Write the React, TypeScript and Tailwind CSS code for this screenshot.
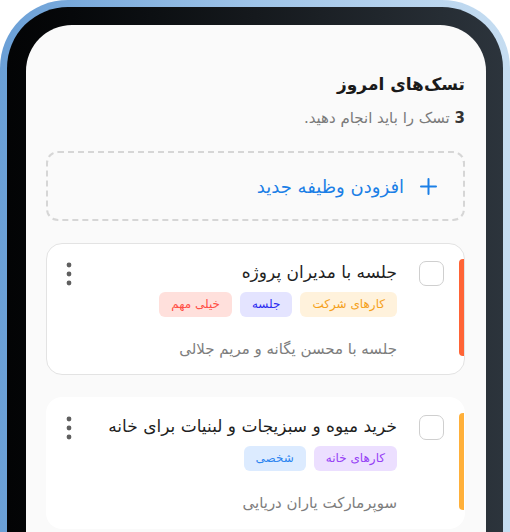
import React from "react";

type Tag = { label: string; cls: string };
type Task = { title: string; desc: string; bar: string; tags: Tag[]; bordered: boolean };

const tasks: Task[] = [
  {
    title: "جلسه با مدیران پروژه",
    desc: "جلسه با محسن یگانه و مریم جلالی",
    bar: "bg-[#ff6436]",
    bordered: true,
    tags: [
      { label: "کارهای شرکت", cls: "bg-[#fff2dc] text-[#f5a01a]" },
      { label: "جلسه", cls: "bg-[#e4e4ff] text-[#2b2bf0]" },
      { label: "خیلی مهم", cls: "bg-[#ffe0dc] text-[#ff4f45]" },
    ],
  },
  {
    title: "خرید میوه و سبزیجات و لبنیات برای خانه",
    desc: "سوپرمارکت یاران دریایی",
    bar: "bg-[#ffb03a]",
    bordered: false,
    tags: [
      { label: "کارهای خانه", cls: "bg-[#ecdfff] text-[#9640f5]" },
      { label: "شخصی", cls: "bg-[#dcebff] text-[#2e86f0]" },
    ],
  },
];

function Kebab() {
  return (
    <svg width="8" height="24" viewBox="0 0 8 24" className="shrink-0">
      <circle cx="4" cy="3" r="2.4" fill="#5f5f5f" />
      <circle cx="4" cy="12" r="2.4" fill="#5f5f5f" />
      <circle cx="4" cy="21" r="2.4" fill="#5f5f5f" />
    </svg>
  );
}

function Card({ t }: { t: Task }) {
  return (
    <div
      className={`relative mt-[22px] rounded-[16px] bg-white pr-5 pl-[18px] pt-[17px] pb-[15px] flex items-start gap-[22px] border ${
        t.bordered ? "border-[#e3e3e3]" : "border-transparent"
      }`}
    >
      <div className={`absolute right-0 top-[15px] bottom-[18px] w-[5px] rounded-l-[4px] ${t.bar}`} />
      <div className="w-[25px] h-[25px] shrink-0 rounded-[7px] border-[1.5px] border-[#cfcfcf] bg-white" />
      <div className="flex-1 min-w-0">
        <div className="text-[17px] leading-[22px] text-[#1f1f1f]">{t.title}</div>
        <div className="flex gap-2 mt-[9px]">
          {t.tags.map((g) => (
            <span
              key={g.label}
              className={`h-[25px] px-[12px] rounded-[6px] text-[12px] leading-[25px] ${g.cls}`}
            >
              {g.label}
            </span>
          ))}
        </div>
        <div className="mt-[22px] text-[15px] leading-5 text-[#7d7d7d]">{t.desc}</div>
      </div>
      <div className="pt-[1px]">
        <Kebab />
      </div>
    </div>
  );
}

export default function App() {
  return (
    <div
      dir="rtl"
      className="w-[510px] h-[532px] overflow-hidden bg-white"
      style={{ fontFamily: '"DejaVu Sans", sans-serif' }}
    >
      <div className="h-[640px] rounded-[68px] p-[7px] bg-gradient-to-r from-[#6a9fd6] via-[#9fc4e8] to-[#c6ddf1]">
        <div className="h-full rounded-[61px] pt-[18px] pb-[18px] pl-[19px] pr-[17px] bg-gradient-to-r from-[#030405] via-[#15191d] to-[#2c343c]">
          <div className="h-full rounded-[46px] bg-[#fafafa] pl-5 pr-[21px] pt-[45px]">
            <div className="text-[17px] leading-7 font-bold text-[#1a1a1a]">تسک‌های امروز</div>
            <div className="mt-[10px] text-[15px] leading-5 text-[#7a7a7a]">
              <span className="font-bold text-[#333]">3</span> تسک را باید انجام دهید.
            </div>
            <div className="mt-[23px] h-[70px] rounded-[12px] border-2 border-dashed border-[#d6d6d6] flex items-center gap-[16px] pr-[26px]">
              <svg width="17" height="17" viewBox="0 0 17 17">
                <path d="M8.5 1v15M1 8.5h15" stroke="#1b7fe6" strokeWidth="2" strokeLinecap="round" />
              </svg>
              <span className="text-[18px] font-medium text-[#1b7fe6]">افزودن وظیفه جدید</span>
            </div>
            {tasks.map((t) => (
              <Card key={t.title} t={t} />
            ))}
          </div>
        </div>
      </div>
    </div>
  );
}
